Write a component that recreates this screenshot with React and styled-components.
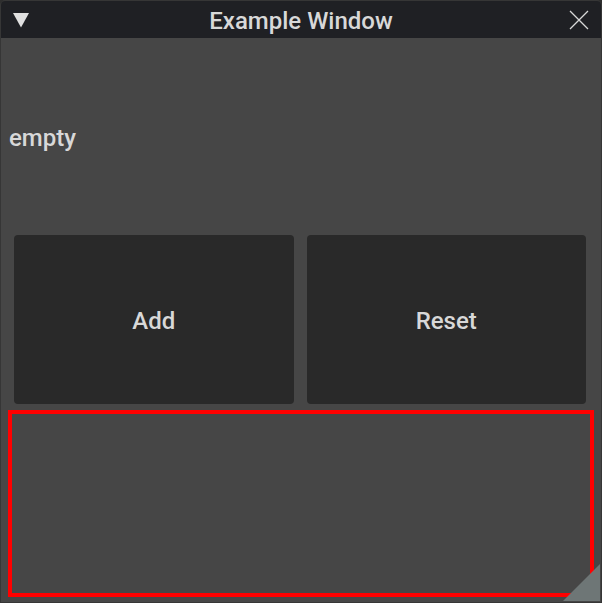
import React from 'react';
import styled, { createGlobalStyle } from 'styled-components';

const GlobalStyle = createGlobalStyle`
  html, body {
    margin: 0;
    padding: 0;
    background: #2e2e2e;
  }
  body {
    font-family: Roboto, "Noto Sans", sans-serif;
  }
`;

const Window = styled.div`
  position: relative;
  width: 602px;
  height: 603px;
  box-sizing: border-box;
  background: #464646;
  border: 1px solid #363636;
  border-radius: 5px 5px 0 0;
  display: flex;
  flex-direction: column;
  overflow: hidden;
`;

const TitleBar = styled.div`
  height: 37px;
  background: #1f2024;
  display: flex;
  align-items: center;
  justify-content: center;
  position: relative;
  color: #d8d8d8;
  font-size: 24px;
  font-weight: 500;
  padding-top: 2px;
  box-sizing: border-box;
  flex-shrink: 0;
`;

const Collapse = styled.svg`
  position: absolute;
  left: 11px;
  top: 11px;
`;

const Close = styled.svg`
  position: absolute;
  right: 12px;
  top: 9px;
`;

const LabelRow = styled.div`
  height: 197px;
  display: flex;
  align-items: center;
  padding-left: 8px;
  padding-top: 3px;
  box-sizing: border-box;
  color: #d8d8d8;
  font-size: 24px;
  font-weight: 500;
  flex-shrink: 0;
`;

const ButtonRow = styled.div`
  display: flex;
  gap: 13px;
  padding: 0 15px 0 13px;
  height: 169px;
  flex-shrink: 0;
`;

const Button = styled.button`
  flex: 1;
  border: none;
  border-radius: 4px;
  background: #292929;
  color: #d8d8d8;
  font-family: Roboto, "Noto Sans", sans-serif;
  font-size: 24px;
  font-weight: 500;
  padding: 3px 0 0;
  cursor: pointer;
`;

const Outlined = styled.div`
  margin: 6px 7px 0 7px;
  height: 187px;
  box-sizing: border-box;
  border: 4px solid #ff0000;
  flex-shrink: 0;
`;

const Grip = styled.div`
  position: absolute;
  right: 1px;
  bottom: 1px;
  width: 37px;
  height: 37px;
  background: #6e7676;
  clip-path: polygon(100% 0, 100% 100%, 0 100%);
`;

export default function App() {
  return (
    <>
      <GlobalStyle />
      <Window>
        <TitleBar>
          <Collapse width="18" height="16" viewBox="0 0 18 16">
            <polygon points="1,1 17,1 9,15.5" fill="#e0e0e0" />
          </Collapse>
          Example Window
          <Close width="20" height="20" viewBox="0 0 20 20">
            <path d="M1 1 L19 19 M19 1 L1 19" stroke="#d8d8d8" strokeWidth="1.3" />
          </Close>
        </TitleBar>
        <LabelRow>empty</LabelRow>
        <ButtonRow>
          <Button>Add</Button>
          <Button>Reset</Button>
        </ButtonRow>
        <Outlined />
        <Grip />
      </Window>
    </>
  );
}
